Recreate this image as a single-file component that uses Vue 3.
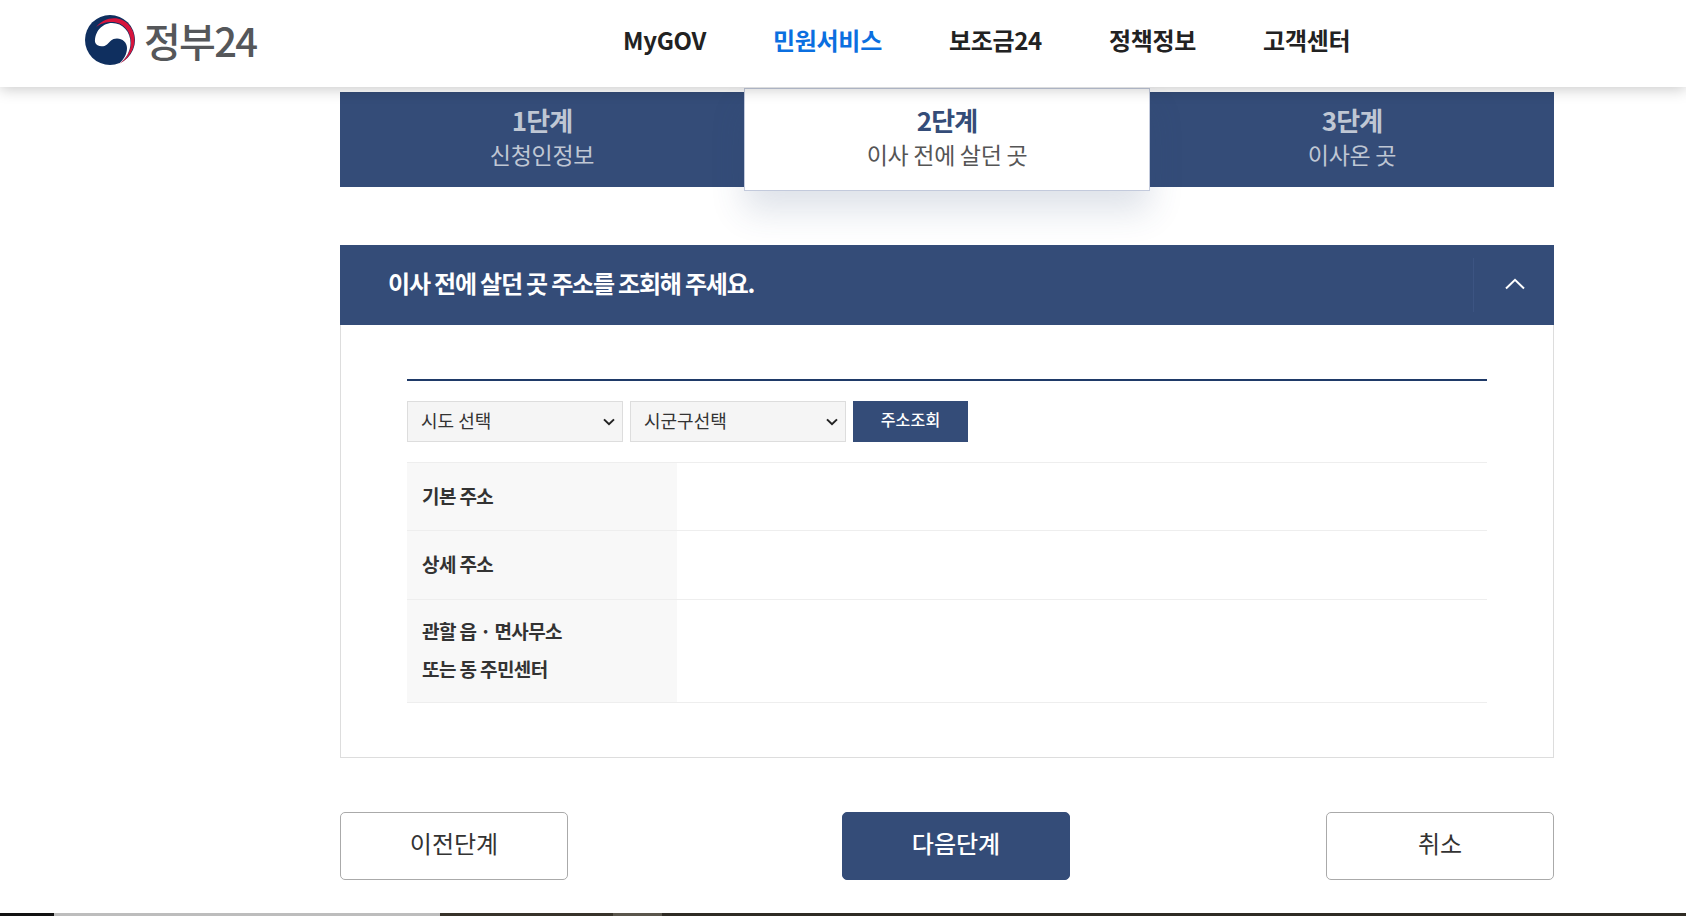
<script setup>
const navItems = [
  { label: 'MyGOV', active: false },
  { label: '민원서비스', active: true },
  { label: '보조금24', active: false },
  { label: '정책정보', active: false },
  { label: '고객센터', active: false },
]
const steps = [
  { title: '1단계', sub: '신청인정보', active: false },
  { title: '2단계', sub: '이사 전에 살던 곳', active: true },
  { title: '3단계', sub: '이사온 곳', active: false },
]
</script>

<template>
  <div class="page">
    <header class="header">
      <a class="logo">
        <svg class="mark" viewBox="0 0 50 50" width="50" height="50" aria-hidden="true">
          <circle cx="25" cy="25" r="25" fill="#0f2f5f" />
          <path d="M11 12C16 6 22 3.2 29 3.2 41 3.2 49.5 13 49.5 25 49.5 35 43 44.5 34 49 41 44 46 36 46 28 46 16 38 7 27 7 20 7 15 9 11 12Z" fill="#d6143c" />
          <path d="M10 27C9.5 17 17 8 27 8 38 8 45.5 17 45.5 28 45.5 36 41 44 34 49 39 44 42 39 42 33 42 27.5 37.5 23.5 32 23.5 26.5 23.5 25 27 22 29.5 18.5 32.5 11.5 32 10 27Z" fill="#fff" />
        </svg>
        <span class="logo-text">정부24</span>
      </a>
      <nav class="nav">
        <a v-for="item in navItems" :key="item.label" class="nav-item" :class="{ on: item.active }">{{ item.label }}</a>
      </nav>
    </header>

    <main class="main">
      <ol class="steps">
        <li v-for="step in steps" :key="step.title" class="step" :class="{ on: step.active }">
          <strong class="step-title">{{ step.title }}</strong>
          <span class="step-sub">{{ step.sub }}</span>
        </li>
      </ol>

      <section class="section">
        <div class="section-head">
          <h2 class="section-title">이사 전에 살던 곳 주소를 조회해 주세요.</h2>
          <button class="toggle" type="button" aria-label="접기">
            <svg viewBox="0 0 20 12" width="20" height="12" aria-hidden="true">
              <path d="M1 10.5 10 1.8l9 8.7" fill="none" stroke="#fff" stroke-width="2" />
            </svg>
          </button>
        </div>
        <div class="section-body">
          <div class="search">
            <div class="select-wrap">
              <select class="select"><option>시도 선택</option></select>
              <svg class="chev" viewBox="0 0 12 8" width="12" height="8" aria-hidden="true"><path d="M1 1.4 6 6.2l5-4.8" fill="none" stroke="#222" stroke-width="2" /></svg>
            </div>
            <div class="select-wrap">
              <select class="select"><option>시군구선택</option></select>
              <svg class="chev" viewBox="0 0 12 8" width="12" height="8" aria-hidden="true"><path d="M1 1.4 6 6.2l5-4.8" fill="none" stroke="#222" stroke-width="2" /></svg>
            </div>
            <button class="search-btn" type="button">주소조회</button>
          </div>
          <table class="table">
            <tbody>
              <tr class="r1"><th>기본 주소</th><td></td></tr>
              <tr class="r2"><th>상세 주소</th><td></td></tr>
              <tr class="r3"><th>관할 읍 · 면사무소<br />또는 동 주민센터</th><td></td></tr>
            </tbody>
          </table>
        </div>
      </section>

      <div class="actions">
        <button class="btn" type="button">이전단계</button>
        <button class="btn primary" type="button">다음단계</button>
        <button class="btn cancel" type="button">취소</button>
      </div>
    </main>

    <div class="strip">
      <span class="s1"></span><span class="s2"></span><span class="s3"></span><span class="s4"></span><span class="s5"></span>
    </div>
  </div>
</template>

<style>
html, body { margin: 0; background: #fff; overflow: hidden; }
</style>

<style scoped>
.page {
  display: flex;
  flex-direction: column;
  height: 916px;
  overflow: hidden;
  font-family: "Noto Sans CJK KR", "Noto Sans", sans-serif;
  color: #222;
}
.header {
  position: relative;
  z-index: 5;
  flex: none;
  display: flex;
  align-items: center;
  box-sizing: border-box;
  height: 87px;
  padding-bottom: 7px;
  background: #fff;
  box-shadow: 0 2px 14px rgba(0, 0, 0, .22);
}
.logo { display: flex; align-items: center; margin-left: 85px; width: 538px; }
.mark { flex: none; }
.logo-text {
  margin-left: 9px;
  font-size: 40px;
  line-height: 1;
  letter-spacing: -1.7px;
  color: #55575a;
  font-weight: 500;
}
.nav { display: flex; gap: 67px; }
.nav-item { font-size: 24px; font-weight: 700; letter-spacing: -.3px; line-height: 36px; color: #222; }
.nav-item.on { color: #0b6fe0; }

.main { flex: 1; margin-left: 340px; width: 1214px; padding-top: 5px; }
.steps { display: flex; list-style: none; margin: 0; padding: 0; height: 95px; }
.step {
  flex: 1;
  display: flex;
  flex-direction: column;
  align-items: center;
  padding-top: 10px;
  box-sizing: border-box;
  background: #344c78;
  color: rgba(255, 255, 255, .7);
}
.step.on {
  position: relative;
  z-index: 2;
  margin: -4px 0 -4px;
  padding-top: 13px;
  background: #fff;
  border: 1px solid #c3cadc;
  color: #555;
  box-shadow: 0 20px 34px rgba(52, 76, 120, .16);
}
.step-title { font-size: 26px; line-height: 36px; letter-spacing: -.9px; font-weight: 700; }
.step.on .step-title { color: #344c78; }
.step-sub { font-size: 23px; line-height: 32px; letter-spacing: -.3px; }

.section { margin-top: 58px; }
.section-head {
  display: flex;
  align-items: center;
  justify-content: space-between;
  height: 80px;
  background: #344c78;
  padding-left: 48px;
  box-sizing: border-box;
}
.section-title { margin: 0 0 4px; font-size: 24px; font-weight: 700; letter-spacing: -1.2px; color: #fff; line-height: 36px; }
.toggle {
  display: flex;
  align-items: center;
  justify-content: center;
  width: 81px;
  height: 54px;
  padding: 0 0 2px 2px;
  background: none;
  border: 0;
  border-left: 1px solid #3c5482;
}
.section-body {
  border: 1px solid #ddd;
  border-top: 0;
  padding: 54px 66px;
}
.search { display: flex; gap: 7px; padding-top: 20px; border-top: 2px solid #1f3a68; height: 41px; }
.select-wrap { position: relative; width: 216px; height: 41px; }
.select {
  appearance: none;
  width: 100%;
  height: 100%;
  box-sizing: border-box;
  padding: 0 30px 4px 13px;
  background: #f5f5f5;
  border: 1px solid #ddd;
  border-radius: 0;
  font: 400 18px "Noto Sans CJK KR", sans-serif;
  color: #333;
}
.chev { position: absolute; right: 8px; top: 17px; }
.search-btn {
  width: 115px;
  height: 41px;
  padding: 0 0 6px;
  border: 0;
  background: #344c78;
  color: #fff;
  font: 500 16px "Noto Sans CJK KR", sans-serif;
  letter-spacing: .2px;
}
.table { width: 100%; margin-top: 20px; border-collapse: collapse; border-top: 1px solid #eee; }
.table th {
  padding: 0 0 2px 15px;
  box-sizing: content-box;
  width: 255px;
  background: #f8f8f8;
  text-align: left;
  font-size: 19px;
  font-weight: 700;
  line-height: 38px;
  letter-spacing: -.6px;
  color: #333;
  border-bottom: 1px solid #eee;
}
.table td { border-bottom: 1px solid #eee; }
.r1 { height: 68px; }
.r2 { height: 69px; }
.r3 { height: 103px; }

.actions { display: flex; margin-top: 54px; }
.btn {
  width: 228px;
  height: 68px;
  padding: 0 0 7px;
  box-sizing: border-box;
  background: #fff;
  border: 1px solid #aaa;
  border-radius: 5px;
  font: 400 24px "Noto Sans CJK KR", sans-serif;
  letter-spacing: 0;
  color: #333;
}
.btn.primary { margin-left: 274px; background: #344c78; border-color: #344c78; color: #fff; font-weight: 500; }
.btn.cancel { margin-left: auto; }

.strip { flex: none; display: flex; height: 3px; }
.s1 { width: 54px; background: #111; }
.s2 { width: 386px; background: #bdbdbd; }
.s3 { width: 173px; background: #38332a; }
.s4 { width: 49px; background: #5a564c; }
.s5 { flex: 1; background: #2f2b24; }
</style>
